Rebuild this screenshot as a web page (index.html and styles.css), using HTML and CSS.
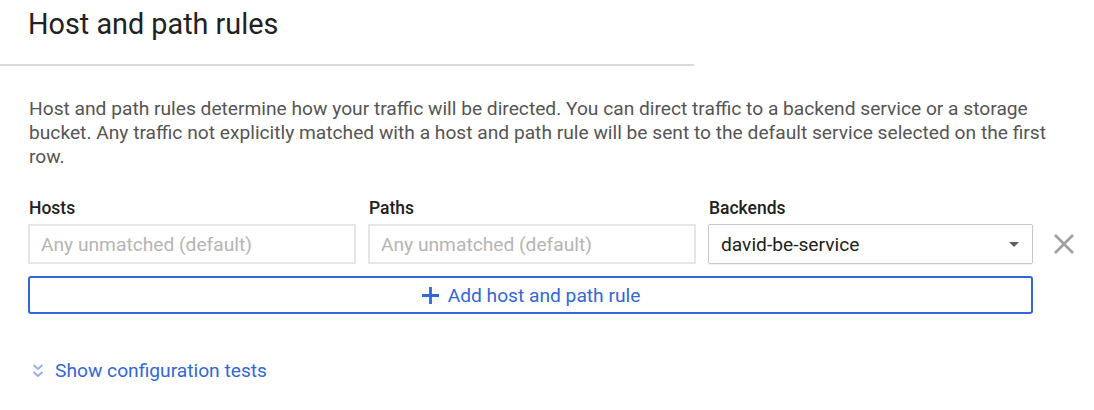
FILE: index.html
```html
<!DOCTYPE html>
<html>
<head>
<meta charset="utf-8">
<link rel="stylesheet" href="styles.css">
</head>
<body>
<div class="page">
  <header class="head">
    <h1 class="title">Host and path rules</h1>
  </header>
  <section class="content">
    <p class="desc">Host and path rules determine how your traffic will be directed. You can direct traffic to a backend service or a storage bucket. Any traffic not explicitly matched with a host and path rule will be sent to the default service selected on the first row.</p>
    <div class="rules">
      <div class="label">Hosts</div>
      <div class="label">Paths</div>
      <div class="label">Backends</div>
      <div class="spacer"></div>
      <div class="field disabled">Any unmatched (default)</div>
      <div class="field disabled">Any unmatched (default)</div>
      <div class="field select">
        <span>david-be-service</span>
        <span class="caret"></span>
      </div>
      <div class="remove">
        <svg width="22" height="22" viewBox="0 0 22 22"><path d="M2 2 L20 20 M20 2 L2 20" stroke="#9e9e9e" stroke-width="2.6" fill="none"/></svg>
      </div>
      <button class="add">
        <svg width="19" height="19" viewBox="0 0 19 19"><path d="M9.5 1 V18 M1 9.5 H18" stroke="#3367d6" stroke-width="2.8" fill="none"/></svg>
        <span>Add host and path rule</span>
      </button>
    </div>
    <div class="tests">
      <svg class="chev" width="12" height="16" viewBox="0 0 12 16"><path d="M1.5 2 L6 6 L10.5 2 M1.5 9 L6 13 L10.5 9" stroke="#9ab0e6" stroke-width="2" fill="none"/></svg>
      <span>Show configuration tests</span>
    </div>
  </section>
</div>
</body>
</html>
```
FILE: styles.css
```css
* { box-sizing: border-box; }
body {
  margin: 0;
  background: #fff;
  font-family: Roboto, "Noto Sans", Arial, sans-serif;
  color: #212121;
}
.page { width: 1094px; }
.head {
  width: 694px;
  border-bottom: 2px solid #dadada;
  padding: 7px 0 0 28px;
  height: 66px;
}
.title {
  margin: 0;
  font-size: 28.8px;
  font-weight: 400;
  line-height: 34px;
  color: #212121;
}
.content { padding: 0 28px; }
.desc {
  margin: 31px 0 0 1px;
  width: 1037px;
  font-size: 19.2px;
  line-height: 24px;
  color: #555;
}
.rules {
  margin-top: 28px;
  display: grid;
  grid-template-columns: 328px 328px 325px 42px;
  column-gap: 12px;
  row-gap: 0;
}
.label {
  font-size: 17.5px;
  font-weight: 500;
  line-height: 22px;
  color: #212121;
  padding-left: 1px;
  margin-bottom: 5px;
}
.field {
  height: 40px;
  border: 2px solid #e6e6e6;
  padding: 0 11px;
  display: flex;
  align-items: center;
  font-size: 19.2px;
}
.disabled { color: #b5b5b5; }
.select {
  border: 1px solid #c6c6c6;
  border-radius: 2px;
  color: #212121;
  padding: 0 12px;
  justify-content: space-between;
  box-shadow: 0 1px 1px rgba(0,0,0,0.06);
}
.caret {
  width: 0;
  height: 0;
  border-left: 5px solid transparent;
  border-right: 5px solid transparent;
  border-top: 5px solid #5f5f5f;
  margin-right: 1px;
}
.remove {
  display: flex;
  align-items: center;
  padding-left: 8px;
}
.add {
  grid-column: 1 / 4;
  margin-top: 12px;
  height: 38px;
  border: 2px solid #3367d6;
  border-radius: 3px;
  background: #fff;
  display: flex;
  align-items: center;
  justify-content: center;
  gap: 8px;
  font-family: inherit;
  font-size: 19.2px;
  color: #3367d6;
  padding: 0;
}
.tests {
  margin-top: 45px;
  display: flex;
  align-items: center;
  gap: 11px;
  padding-left: 4px;
  font-size: 19.2px;
  line-height: 24px;
  color: #3367d6;
}
```
